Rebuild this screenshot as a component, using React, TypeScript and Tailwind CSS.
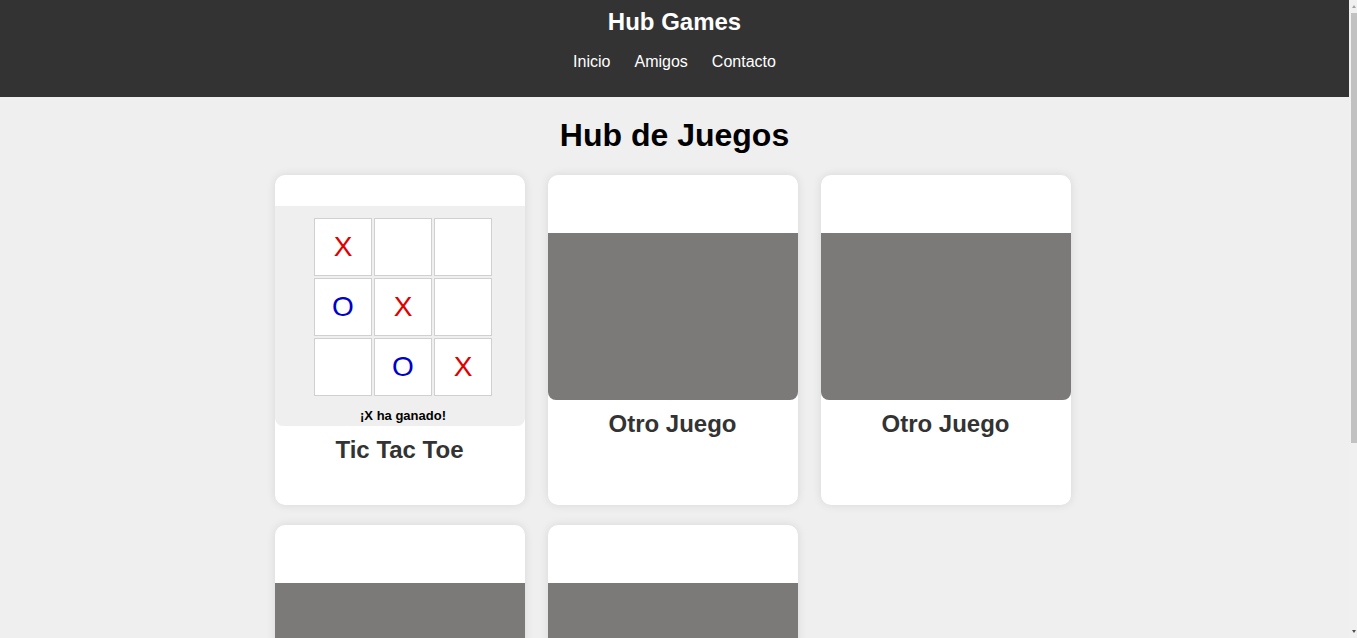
import React from "react";

const board = ["X", "", "", "O", "X", "", "", "O", "X"];

function Card({ children, title }: { children: React.ReactNode; title: string }) {
  return (
    <div className="h-[330px] w-[250px] rounded-[10px] bg-white shadow-[0_0_10px_rgba(0,0,0,0.1)] flex flex-col justify-center">
      {children}
      <div className="h-[48px] flex items-center justify-center text-[24px] font-bold text-[#333]">{title}</div>
    </div>
  );
}

function Placeholder() {
  return <div className="h-[167px] w-full bg-[#7b7a78] rounded-b-[8px]" />;
}

function ScrollBar() {
  return (
    <div className="fixed right-0 top-0 h-screen w-[8px] bg-[#f0f0f0] flex flex-col items-end">
      <svg width="6" height="12" viewBox="0 0 6 12" className="shrink-0">
        <path d="M1 8 L3 5 L5 8 Z" fill="#a3a3a3" />
      </svg>
      <div className="mt-[1px] h-[430px] w-[6px] bg-[#c1c1c1]" />
      <div className="flex-1" />
      <svg width="6" height="12" viewBox="0 0 6 12" className="shrink-0">
        <path d="M1 4 L3 7 L5 4 Z" fill="#505050" />
      </svg>
    </div>
  );
}

export default function App() {
  return (
    <div className="min-h-screen pr-[8px] bg-[#efefef] font-['Liberation_Sans',Arial,sans-serif] text-black">
      <header className="h-[97px] bg-[#333] text-white flex flex-col items-center pt-[8px]">
        <h1 className="text-[24px] font-bold leading-[28px]">Hub Games</h1>
        <nav className="mt-[17px] flex gap-[24px] text-[16px] leading-[18px]">
          <a>Inicio</a>
          <a>Amigos</a>
          <a>Contacto</a>
        </nav>
      </header>
      <main className="pt-[20px] pb-[56px]">
        <h2 className="text-center text-[32px] font-bold leading-[37px] mb-[21px]">Hub de Juegos</h2>
        <div className="mx-auto w-[800px] grid grid-cols-[repeat(3,250px)] gap-x-[23px] gap-y-[20px] justify-start">
          <Card title="Tic Tac Toe">
            <div className="h-[220px] w-full bg-[#efefef] rounded-b-[8px] flex flex-col items-center pt-[12px] pl-[7px]">
              <div className="grid grid-cols-[repeat(3,58px)] gap-[2px]">
                {board.map((c, i) => (
                  <div
                    key={i}
                    className={
                      "h-[58px] w-[58px] bg-white border border-[#d0d0d0] flex items-center justify-center text-[28px] " +
                      (c === "X" ? "text-[#e00000]" : "text-[#0000cc]")
                    }
                  >
                    {c}
                  </div>
                ))}
              </div>
              <div className="mt-[12px] text-[13px] font-bold leading-[15px]">¡X ha ganado!</div>
            </div>
          </Card>
          <Card title="Otro Juego">
            <Placeholder />
          </Card>
          <Card title="Otro Juego">
            <Placeholder />
          </Card>
          <Card title="Otro Juego">
            <Placeholder />
          </Card>
          <Card title="Otro Juego">
            <Placeholder />
          </Card>
        </div>
      </main>
      <ScrollBar />
    </div>
  );
}
